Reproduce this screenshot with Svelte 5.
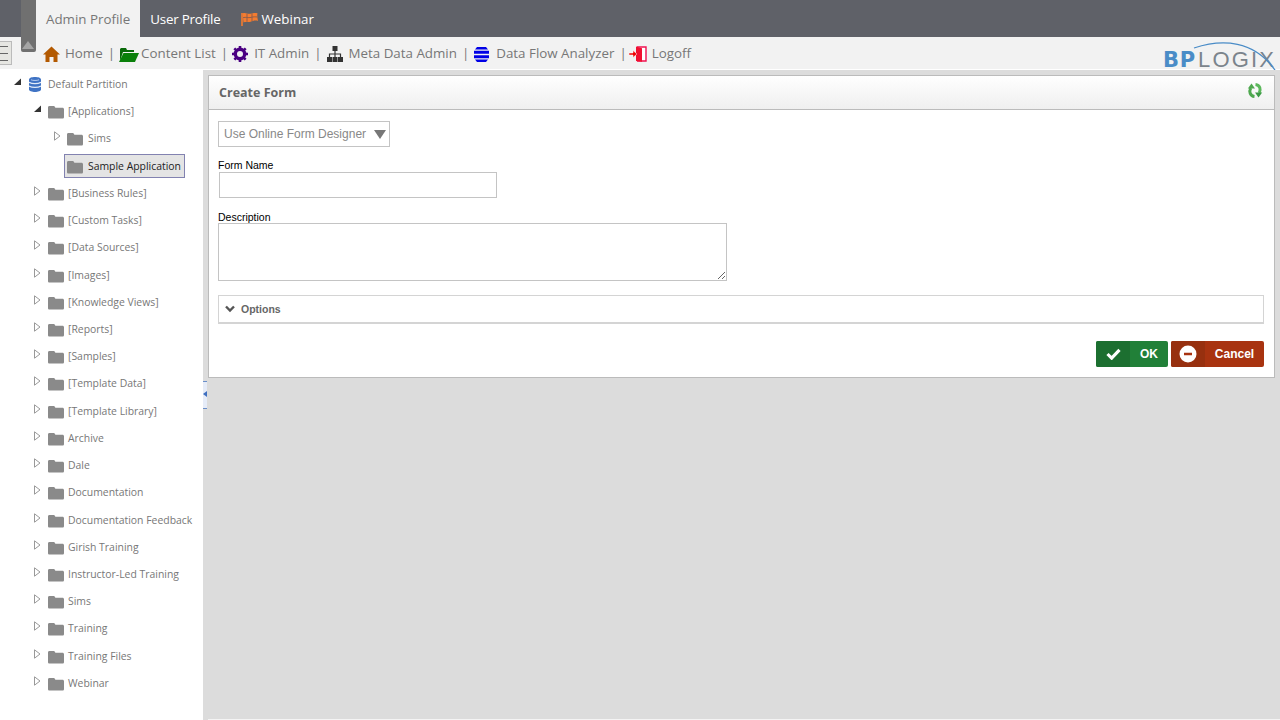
<script>
  const folders = ['[Business Rules]','[Custom Tasks]','[Data Sources]','[Images]','[Knowledge Views]','[Reports]','[Samples]','[Template Data]','[Template Library]','Archive','Dale','Documentation','Documentation Feedback','Girish Training','Instructor-Led Training','Sims','Training','Training Files','Webinar'];
</script>

{#snippet folder()}
  <svg class="folder" viewBox="0 0 16 14" width="16" height="14"><path d="M0 2.500C0 1.500.6 1 1.500 1h4c.8 0 1.200.4 1.600 1.200l.3.6h7c1 0 1.600.6 1.600 1.500v7.700c0 1-.6 1.500-1.500 1.500h-13C.6 13.500 0 13 0 12z" fill="#8a8a8a"/></svg>
{/snippet}
{#snippet closed()}
  <svg class="arrow" viewBox="0 0 7 10" width="7" height="10"><path d="M.5.800 6 5 .5 9.200z" fill="#fff" stroke="#999"/></svg>
{/snippet}
{#snippet open()}
  <svg class="arrow" viewBox="0 0 7 10" width="7" height="10"><path d="M7 1.500V8H0z" fill="#333"/></svg>
{/snippet}

<div class="page">
  <header class="tabs">
    <span class="tab active">Admin Profile</span>
    <span class="tab user">User Profile</span>
    <span class="tab flagtab">
      <svg viewBox="0 0 17 14" width="17" height="14"><path d="M1 1v13" stroke="#f47c30" stroke-width="1.600"/><path d="M1.500 1.500c3-1.500 5 1 8 .2s4.500-1 7-.4c-.7 2.700.1 5.200.5 7.700-3-.9-5 0-7.500.8s-4.500-.6-7 .6z" fill="#f47c30"/><path d="M6 1.800v8M11 1.500v7.500M2 5.700c3-1 5 .5 8-.3s4-.6 6.500-.4" stroke="#8f5f4c" stroke-width="1" fill="none"/></svg>
      Webinar
    </span>
  </header>

  <nav class="nav">
    <span class="item home">
      <svg viewBox="0 0 17 16" width="17" height="16"><path d="M8.500.500 17 8.500h-2.500V16h-4v-5h-4v5h-4V8.500H0z" fill="#b35900"/></svg>
      Home
    </span>
    <span class="sep">|</span>
    <span class="item tight">
      <svg viewBox="0 0 20 15" width="20" height="15"><path d="M2 1h5l1 2h7v2H4L1 14V2z" fill="#0a6a0a"/><path d="M4.500 6H20l-4 9H0z" fill="#0a800a"/></svg>
      Content List
    </span>
    <span class="sep">|</span>
    <span class="item">
      <svg viewBox="0 0 16 16" width="16" height="16"><circle cx="8" cy="8" r="4.700" fill="none" stroke="#4b0082" stroke-width="3.400"/><path d="M8 0v16M0 8h16M2.300 2.300l11.400 11.400M13.700 2.300 2.300 13.700" stroke="#4b0082" stroke-width="2.600" stroke-dasharray="3 10 3"/></svg>
      IT Admin
    </span>
    <span class="sep wide">|</span>
    <span class="item">
      <svg viewBox="0 0 16 16" width="16" height="16"><path d="M5.500 0h5v5h-5zM0 11h5v5H0zM5.500 11h5v5h-5zM11 11h5v5h-5z" fill="#333"/><path d="M8 5v6M2.500 11V8h11v3" fill="none" stroke="#333" stroke-width="1.200"/></svg>
      Meta Data Admin
    </span>
    <span class="sep wide">|</span>
    <span class="item flow">
      <svg viewBox="0 0 15 15" width="15" height="15"><path d="M3 0h9l2 2.500H1zM0 3.800h15v3H0zM0 8.200h15v3H0zM1 12.500h13L12 15H3z" fill="#0000e6"/></svg>
      Data Flow Analyzer
    </span>
    <span class="sep last">|</span>
    <span class="item logoff">
      <svg viewBox="0 0 18 16" width="18" height="16"><path d="M8 1h9v14H8" fill="#fff" stroke="#f01050" stroke-width="1.400"/><path d="M7 .5l6 1.800v13.400l-6-.7z" fill="#f01030"/><path d="M0 7h4V4.500L8 8l-4 3.500V9H0z" fill="#e00" stroke="#fff" stroke-width=".5"/></svg>
      Logoff
    </span>
    <div class="logo">
      <svg class="arc" viewBox="0 0 90 34" width="90" height="34"><path d="M1 6C28-3 62-3 84 31" fill="none" stroke="#4a8cc7" stroke-width="1.300"/></svg>
      <span class="bp">BP</span><span class="logix">LOGIX</span>
    </div>
  </nav>

  <div class="collapse"><span></span></div>
  <div class="menu"><i></i><i></i><i></i></div>

  <div class="main">
    <aside class="tree">
      <div class="row l1">
        {@render open()}
        <svg class="db" viewBox="0 0 12 15" width="12" height="15"><path d="M0 2.500c0-3.300 12-3.300 12 0v10c0 3.300-12 3.300-12 0z" fill="#3f73c4"/><path d="M0 5.200c3 1.800 9 1.800 12 0M0 9c3 1.800 9 1.800 12 0" stroke="#e3ecf9" fill="none" stroke-width="1.300"/><path d="M2 2.800c2 .9 6 .9 8 0" stroke="#b5cbef" fill="none"/></svg>
        <span class="lbl">Default Partition</span>
      </div>
      <div class="row l2">{@render open()}{@render folder()}<span class="lbl">[Applications]</span></div>
      <div class="row l3">{@render closed()}{@render folder()}<span class="lbl">Sims</span></div>
      <div class="row l3b">
        <div class="selected">{@render folder()}<span class="lbl">Sample Application</span></div>
      </div>
      {#each folders as f}
        <div class="row l2">{@render closed()}{@render folder()}<span class="lbl">{f}</span></div>
      {/each}
    </aside>

    <section class="content">
      <div class="splitter"></div>
      <div class="panel">
        <div class="phead">
          <h1>Create Form</h1>
          <svg class="refresh" viewBox="0 0 16 17" width="16" height="17">
            <path d="M7.500 14.500C3 14 1.800 9.500 3.800 6" fill="none" stroke="#4fa84f" stroke-width="3"/><path d="M.8 6.500 4.500 1.500 8 6.500z" fill="#4fa84f"/>
            <path d="M8.500 2.500C13 3 14.200 7.500 12.200 11" fill="none" stroke="#5cb85c" stroke-width="3"/><path d="M15.200 10.500 11.500 15.500 8 10.500z" fill="#3c9a45"/>
          </svg>
        </div>
        <div class="pbody">
          <div class="select">Use Online Form Designer <span class="tri"></span></div>
          <label class="f1" for="fn">Form Name</label>
          <input id="fn" class="input" />
          <label class="f2" for="ds">Description</label>
          <textarea id="ds" class="area"></textarea>
          <div class="options">
            <svg viewBox="0 0 10 8" width="10" height="8"><path d="M1 1.500 5 5.500 9 1.500" fill="none" stroke="#555" stroke-width="2.400"/></svg>
            Options
          </div>
          <div class="actions">
            <div class="btn ok">
              <span class="ic"><svg viewBox="0 0 16 13" width="15" height="12"><path d="M1.500 6.500 6 11l8.500-9" fill="none" stroke="#fff" stroke-width="3.400"/></svg></span>
              <span class="tx">OK</span>
            </div>
            <div class="btn cancel">
              <span class="ic"><svg viewBox="0 0 18 18" width="18" height="18"><circle cx="9" cy="9" r="8.500" fill="#fff"/><path d="M5 9h8" stroke="#a83310" stroke-width="2.400"/></svg></span>
              <span class="tx">Cancel</span>
            </div>
          </div>
        </div>
      </div>
      <div class="foot"></div>
    </section>
  </div>
</div>

<style>
  :global(body) { margin: 0; background: #fff; overflow: hidden; }
  .page { position: relative; width: 1280px; height: 720px; display: flex; flex-direction: column; font-family: "Open Sans", "Noto Sans", sans-serif; overflow: hidden; }
  .tabs { height: 37px; background: #5f6168; display: flex; padding-left: 36px; flex: none; }
  .tab { display: flex; align-items: center; gap: 4px; padding: 0 10px; color: #fff; font-size: 13.350px; height: 37px; box-sizing: border-box; }
  .tab.active { background: #f2f2f2; color: #777; }
  .tab.user { letter-spacing: -.2px; }
  .nav { height: 32px; background: #f2f2f2; flex: none; display: flex; align-items: center; padding-left: 43px; color: #777; font-size: 13.350px; position: relative; border-bottom: 1px solid #fff; }
  .item { display: flex; align-items: center; gap: 6px; white-space: nowrap; }
  .item svg { flex: none; margin-top: 2px; }
  .item.home { gap: 5px; }
  .item.tight { gap: 2px; }
  .item.flow { gap: 7px; }
  .item.logoff { gap: 5px; }
  .sep { margin: 0 4px 0 5px; color: #777; }
  .sep.wide { margin-right: 5px; }
  .sep.last { margin-right: 2px; }
  .logo { position: absolute; left: 1163px; top: 12px; height: 20px; display: flex; align-items: baseline; font-size: 21px; line-height: 22px; }
  .bp { color: #4a8cc7; font-family: "DejaVu Sans", sans-serif; font-weight: 700; font-size: 21px; letter-spacing: .8px; margin-right: 2px; }
  .logix { color: #7b848c; font-family: "Liberation Sans", sans-serif; letter-spacing: 2.200px; font-size: 22px; }
  .arc { position: absolute; left: 30px; top: -7px; }
  .collapse { position: absolute; left: 21px; top: 0; width: 15px; height: 52px; background: #707070; border-radius: 0 0 2px 2px; }
  .collapse span { position: absolute; left: 1px; bottom: 3px; border: 6.500px solid transparent; border-top: 0; border-bottom: 8px solid #a5a5a5; }
  .menu { position: absolute; left: 0; top: 41px; width: 12px; height: 24px; border: 1px solid #bbb; border-left: 0; background: #e6e6e2; box-sizing: border-box; display: flex; flex-direction: column; justify-content: center; gap: 6px; }
  .menu i { display: block; height: 1px; width: 8px; background: #666; }
  .main { flex: 1; display: flex; min-height: 0; }
  .tree { width: 203px; flex: none; background: #fff; padding-top: .4px; box-sizing: border-box; font-size: 10.420px; color: #777; }
  .row { height: 27.220px; display: flex; align-items: center; white-space: nowrap; }
  .row :global(.arrow) { flex: none; margin-top: -4px; }
  .l1 { padding-left: 14px; }
  .l1 .db { margin-left: 8px; margin-right: 7px; flex: none; }
  .l2 { padding-left: 34px; }
  .l3 { padding-left: 54px; }
  .l2 :global(.folder) { margin-left: 7px; }
  .row :global(.folder) { flex: none; margin-right: 4px; margin-top: 2px; }
  .l3 :global(.folder) { margin-left: 6px; margin-right: 5px; }
  .l3b { padding-left: 64px; }
  .selected { width: 121px; height: 24px; box-sizing: border-box; border: 1px solid #8282b0; background: #e4e4e4; color: #222; display: flex; align-items: center; padding-left: 2px; }
  .selected :global(.folder) { margin-right: 5px; }
  .content { flex: 1; background: #dcdcdc; position: relative; padding: 5px 5px 0; box-sizing: border-box; min-width: 0; }
  .splitter { position: absolute; left: 0; top: 311px; width: 4px; height: 26px; background: #e6ecf8; border: solid #6b8fc9; border-width: 1px 0; }
  .splitter::after { content: ""; position: absolute; left: 0; top: 9px; border: 3.500px solid transparent; border-left: 0; border-right: 4px solid #3f6fc0; }
  .panel { background: #fff; border: 1px solid #bbb; width: 1067px; height: 303px; box-sizing: border-box; }
  .phead { height: 33px; background: linear-gradient(#fff, #efefef); border-bottom: 1px solid #bbb; display: flex; align-items: center; justify-content: space-between; padding: 0 11px 0 10px; }
  .phead h1 { margin: 0; font-size: 12.500px; font-weight: 700; color: #666; }
  .refresh { margin-top: -5px; }
  .pbody { padding: 11px 10px 0 9px; font-family: "Liberation Sans", sans-serif; }
  .select { width: 172px; height: 26px; box-sizing: border-box; border: 1px solid #c4c4c4; color: #888; font-size: 12px; display: flex; align-items: center; padding-left: 5px; white-space: pre; }
  .tri { margin-left: 5px; border: 6px solid transparent; border-top: 9px solid #777; border-bottom: 0; margin-top: 1px; }
  label { display: block; color: #000; font-size: 10.500px; line-height: 12px; }
  .f1 { margin-top: 12px; height: 13px; }
  .f2 { margin-top: 13px; height: 12px; }
  .input { display: block; width: 278px; height: 26px; margin-left: 1px; box-sizing: border-box; border: 1px solid #c4c4c4; background: #fff; outline: 0; padding: 0; }
  .area { display: block; width: 509px; height: 58px; box-sizing: border-box; border: 1px solid #c4c4c4; background: #fff; outline: 0; padding: 0; margin: 0; }
  .options { margin-top: 14px; width: 1046px; height: 29px; box-sizing: border-box; border: 1px solid #d4d4d4; border-bottom-width: 2px; display: flex; align-items: center; gap: 6px; padding-left: 6px; font-size: 10.500px; font-weight: 700; color: #666; }
  .actions { display: flex; justify-content: flex-end; gap: 3px; margin-top: 17px; width: 1046px; }
  .btn { height: 26px; border-radius: 2px; display: flex; color: #fff; font-size: 12px; font-weight: 700; overflow: hidden; }
  .btn .ic { width: 34px; display: flex; align-items: center; justify-content: center; }
  .btn .tx { flex: 1; display: flex; align-items: center; justify-content: center; }
  .ok { width: 72px; background: #218038; }
  .ok .ic { background: #1c6f30; }
  .cancel { width: 93px; background: #a83310; }
  .cancel .ic { background: #97300f; }
  .foot { position: absolute; left: 5px; right: 0; bottom: 0; height: 1px; background: #f4f4f4; }
</style>
